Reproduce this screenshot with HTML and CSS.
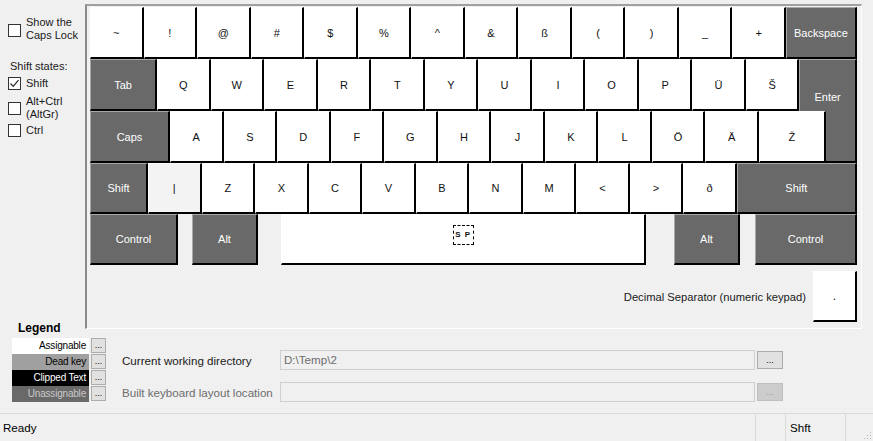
FILE: index.html
```html
<!DOCTYPE html>
<html>
<head>
<meta charset="utf-8">
<link rel="stylesheet" href="styles.css">
</head>
<body>
<div class="app">
  <div class="top">
    <div class="opts">
      <div class="opt opt-caps"><span class="cb"></span><span class="opt-text">Show the<br>Caps Lock</span></div>
      <div class="opt-head">Shift states:</div>
      <div class="opt opt-shift"><span class="cb"><svg width="11" height="11" viewBox="0 0 11 11"><path d="M1.5 5.5 L4.2 8.3 L9.5 2.2" fill="none" stroke="#222" stroke-width="1.2"/></svg></span><span class="opt-text">Shift</span></div>
      <div class="opt opt-alt"><span class="cb"></span><span class="opt-text">Alt+Ctrl<br>(AltGr)</span></div>
      <div class="opt opt-ctrl"><span class="cb"></span><span class="opt-text">Ctrl</span></div>
    </div>
    <div class="panel">
      <div class="kb">
        <div class="row">
          <div class="key">~</div>
          <div class="key">!</div>
          <div class="key">@</div>
          <div class="key">#</div>
          <div class="key">$</div>
          <div class="key">%</div>
          <div class="key">^</div>
          <div class="key">&amp;</div>
          <div class="key">ß</div>
          <div class="key">(</div>
          <div class="key">)</div>
          <div class="key">_</div>
          <div class="key">+</div>
          <div class="key mod bksp">Backspace</div>
        </div>
        <div class="row">
          <div class="key mod tab">Tab</div>
          <div class="key">Q</div>
          <div class="key">W</div>
          <div class="key">E</div>
          <div class="key">R</div>
          <div class="key">T</div>
          <div class="key">Y</div>
          <div class="key">U</div>
          <div class="key">I</div>
          <div class="key">O</div>
          <div class="key">P</div>
          <div class="key">Ü</div>
          <div class="key">Š</div>
          <div class="key mod enter">Enter</div>
        </div>
        <div class="row">
          <div class="key mod caps">Caps</div>
          <div class="key">A</div>
          <div class="key">S</div>
          <div class="key">D</div>
          <div class="key">F</div>
          <div class="key">G</div>
          <div class="key">H</div>
          <div class="key">J</div>
          <div class="key">K</div>
          <div class="key">L</div>
          <div class="key">Ö</div>
          <div class="key">Ä</div>
          <div class="key zh">Ž</div>
        </div>
        <div class="row short">
          <div class="key mod lshift">Shift</div>
          <div class="key pipe">|</div>
          <div class="key">Z</div>
          <div class="key">X</div>
          <div class="key">C</div>
          <div class="key">V</div>
          <div class="key">B</div>
          <div class="key">N</div>
          <div class="key">M</div>
          <div class="key">&lt;</div>
          <div class="key">&gt;</div>
          <div class="key">ð</div>
          <div class="key mod rshift">Shift</div>
        </div>
        <div class="row short">
          <div class="key mod lctrl">Control</div>
          <div class="key mod alt lalt">Alt</div>
          <div class="key space"><span class="sp">S P</span></div>
          <div class="key mod alt ralt">Alt</div>
          <div class="key mod rctrl">Control</div>
        </div>
      </div>
      <div class="dec-row">
        <span class="dec-label">Decimal Separator (numeric keypad)</span>
        <div class="key dec">.</div>
      </div>
    </div>
  </div>
  <div class="bottom">
    <div class="legend">
      <div class="legend-title">Legend</div>
      <div class="lg-rows">
        <div class="lg-row"><div class="sw sw-assign">Assignable</div><div class="dots">...</div></div>
        <div class="lg-row"><div class="sw sw-dead">Dead key</div><div class="dots">...</div></div>
        <div class="lg-row"><div class="sw sw-clip">Clipped Text</div><div class="dots">...</div></div>
        <div class="lg-row"><div class="sw sw-unas">Unassignable</div><div class="dots">...</div></div>
      </div>
    </div>
    <div class="fields">
      <div class="f-row">
        <div class="f-label">Current working directory</div>
        <div class="f-input">D:\Temp\2</div>
        <div class="f-btn">...</div>
      </div>
      <div class="f-row">
        <div class="f-label disabled">Built keyboard layout location</div>
        <div class="f-input"></div>
        <div class="f-btn off">...</div>
      </div>
    </div>
  </div>
  <div class="status">
    <div class="st-main">Ready</div>
    <div class="st-cell st-a"></div>
    <div class="st-cell st-shft">Shft</div>
    <div class="st-cell st-b">
      <svg class="grip" width="10" height="10" viewBox="0 0 10 10">
        <rect x="8" y="2" width="1" height="1" fill="#b8b8b8"/>
        <rect x="5" y="5" width="1" height="1" fill="#b8b8b8"/>
        <rect x="8" y="5" width="1" height="1" fill="#b8b8b8"/>
        <rect x="2" y="8" width="1" height="1" fill="#b8b8b8"/>
        <rect x="5" y="8" width="1" height="1" fill="#b8b8b8"/>
        <rect x="8" y="8" width="1" height="1" fill="#b8b8b8"/>
      </svg>
    </div>
  </div>
</div>
</body>
</html>
```

FILE: styles.css
```css
html, body {
  margin: 0;
  padding: 0;
  background: #f0f0f0;
}
body {
  width: 873px;
  height: 441px;
  overflow: hidden;
  font-family: "Liberation Sans", Arial, sans-serif;
  font-size: 12px;
  color: #000;
}
.app {
  width: 873px;
  height: 441px;
  display: flex;
  flex-direction: column;
}
.top {
  display: flex;
  height: 329px;
  flex: none;
}
.opts {
  width: 85px;
  flex: none;
  padding-top: 16px;
  box-sizing: border-box;
  font-size: 11px;
  color: #1a1a1a;
}
.opt {
  display: flex;
  align-items: center;
  padding-left: 8px;
}
.opt-text {
  line-height: 12.5px;
  margin-left: 5px;
}
.cb {
  width: 13px;
  height: 13px;
  box-sizing: border-box;
  border: 1px solid #333;
  background: #fff;
  flex: none;
  display: flex;
  align-items: center;
  justify-content: center;
}
.opt-caps .cb { margin-top: 4px; }
.opt-head {
  margin-top: 19px;
  padding-left: 10px;
  line-height: 13px;
}
.opt-shift { margin-top: 4px; }
.opt-alt { margin-top: 5px; }
.opt-alt .cb { margin-top: 2px; }
.opt-ctrl { margin-top: 4px; }

.panel {
  margin-top: 4px;
  width: 777px;
  height: 325px;
  box-sizing: border-box;
  border-top: 2px solid #a0a0a0;
  border-left: 2px solid #8a8a8a;
  border-right: 1px solid #fff;
  border-bottom: 1px solid #fff;
  padding: 1px 0 0 3px;
}
.kb {
  width: 767px;
}
.row {
  display: flex;
  height: 52px;
}
.row.short {
  height: 51px;
}
.key {
  flex: none;
  box-sizing: border-box;
  width: 53.54px;
  background: #fff;
  border-top: 1px solid #fff;
  border-left: 1px solid #fff;
  border-right: 2px solid #000;
  border-bottom: 2px solid #000;
  display: flex;
  align-items: center;
  justify-content: center;
  font-size: 11px;
  color: #111;
}
.key.mod {
  background: #696969;
  color: #fff;
  border-top-color: #a8a8a8;
  border-left-color: #a8a8a8;
  font-size: 11px;
}
.key.pipe { background: #f3f3f3; }
.bksp { width: 71px; }
.tab { width: 67px; }
.enter {
  width: 57.5px;
  height: 104px;
  align-self: flex-start;
  align-items: flex-start;
  padding-top: 31px;
}
.caps { width: 80px; }
.zh { width: 67px; }
.lshift { width: 58px; }
.rshift { width: 120px; }
.lctrl { width: 88px; }
.alt { width: 66px; }
.lalt { margin-left: 14px; }
.space {
  width: 365px;
  margin-left: 23px;
  padding-bottom: 9px;
}
.ralt { margin-left: 28px; }
.rctrl { width: 102px; margin-left: 15px; }
.sp {
  width: 21px;
  height: 20px;
  box-sizing: border-box;
  border: 1px dashed #000;
  display: flex;
  align-items: center;
  justify-content: center;
  font-size: 8px;
  font-weight: bold;
  letter-spacing: 0.5px;
  word-spacing: 1px;
}
.dec-row {
  width: 767px;
  display: flex;
  justify-content: flex-end;
  align-items: center;
  margin-top: 6px;
  gap: 7px;
}
.dec-label {
  font-size: 11.2px;
  color: #1a1a1a;
}
.key.dec {
  width: 44px;
  height: 51px;
  font-size: 12px;
}

.bottom {
  display: flex;
  height: 84px;
  flex: none;
}
.legend {
  width: 106px;
  box-sizing: border-box;
  padding-left: 12px;
  flex: none;
}
.legend-title {
  font-weight: bold;
  margin-top: -7px;
  padding-left: 6px;
  height: 13px;
  line-height: 13px;
}
.lg-rows {
  margin-top: 3px;
}
.lg-row {
  display: flex;
  height: 16px;
  align-items: flex-start;
}
.sw {
  width: 77px;
  height: 16px;
  box-sizing: border-box;
  text-align: right;
  padding-right: 3px;
  font-family: "Liberation Sans Narrow", "Liberation Sans", Arial, sans-serif;
  font-size: 10px;
  line-height: 16px;
  letter-spacing: -0.2px;
}
.sw-assign { background: #fff; color: #000; }
.sw-dead { background: #a0a0a0; color: #000; }
.sw-clip { background: #000; color: #fff; }
.sw-unas { background: #696969; color: #c8c8c8; }
.dots {
  width: 15px;
  height: 15px;
  margin-left: 2px;
  box-sizing: border-box;
  border: 1px solid #adadad;
  background: #e1e1e1;
  font-size: 9px;
  line-height: 12px;
  text-align: center;
  color: #000;
}
.fields {
  margin-left: 16px;
  padding-top: 21px;
  display: flex;
  flex-direction: column;
  gap: 12px;
}
.f-row {
  display: flex;
  align-items: center;
  height: 20px;
}
.f-label {
  width: 158px;
  flex: none;
  font-size: 11.6px;
  color: #1a1a1a;
}
.f-label.disabled { color: #6d6d6d; }
.f-input {
  width: 475px;
  height: 20px;
  box-sizing: border-box;
  border: 1px solid #cfcfcf;
  background: #f0f0f0;
  color: #6d6d6d;
  padding-left: 3px;
  font-size: 11.6px;
  line-height: 18px;
}
.f-btn {
  width: 26px;
  height: 18px;
  margin-left: 2px;
  box-sizing: border-box;
  border: 1px solid #adadad;
  background: #e1e1e1;
  font-size: 9px;
  line-height: 16px;
  text-align: center;
  color: #000;
}
.f-btn.off {
  background: #cccccc;
  border-color: #bfbfbf;
  color: #a0a0a0;
}

.status {
  display: flex;
  height: 28px;
  flex: none;
  box-sizing: border-box;
  border-top: 1px solid #dadada;
  font-size: 11.6px;
}
.st-main {
  flex: 1;
  padding-left: 3px;
  line-height: 27px;
}
.st-cell {
  border-left: 1px solid #dadada;
  box-sizing: border-box;
  height: 27px;
}
.st-a { width: 30px; }
.st-shft {
  width: 60px;
  padding-left: 4px;
  line-height: 27px;
}
.st-b {
  width: 28px;
  display: flex;
  justify-content: flex-end;
  align-items: flex-end;
}
.grip {
  margin: 0 1px 1px 0;
}
```
